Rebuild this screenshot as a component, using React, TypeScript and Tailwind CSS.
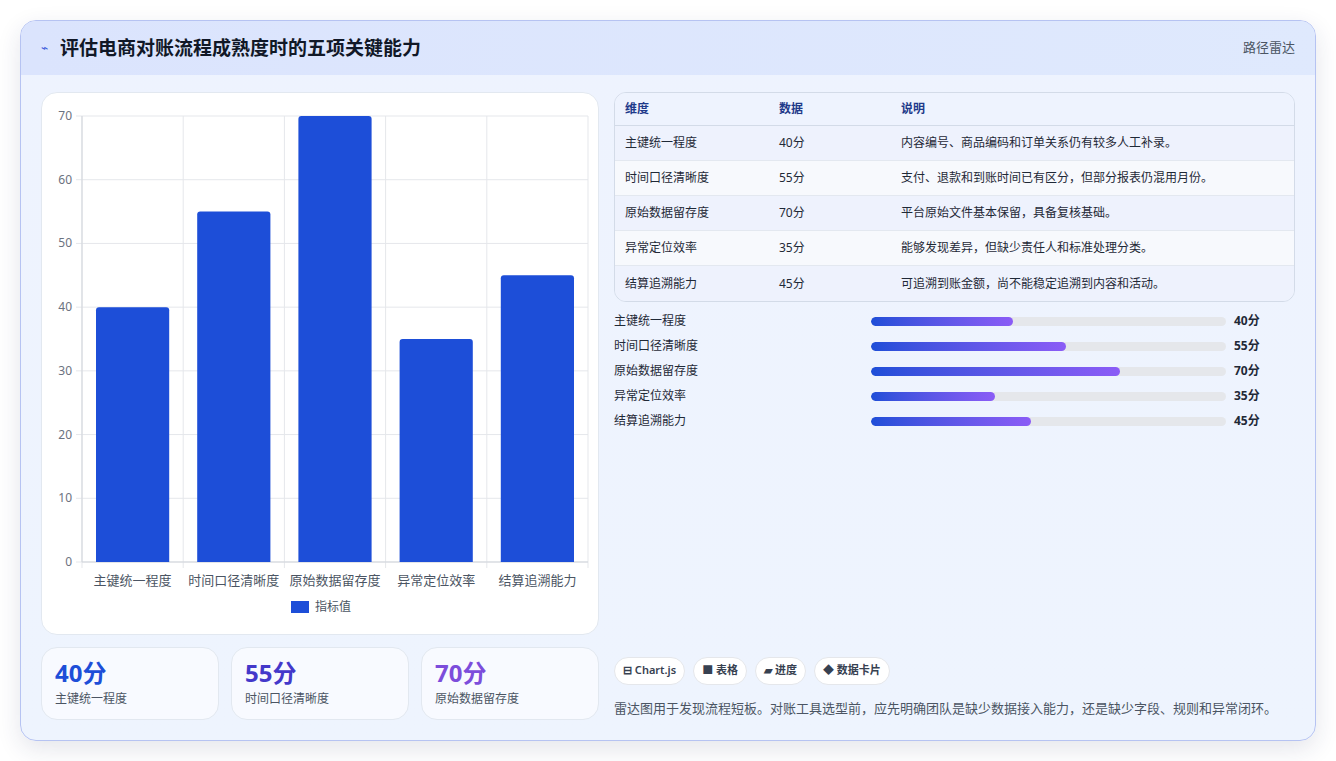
import React from "react";

const data = [
  { name: "主键统一程度", v: 40, d: "内容编号、商品编码和订单关系仍有较多人工补录。" },
  { name: "时间口径清晰度", v: 55, d: "支付、退款和到账时间已有区分，但部分报表仍混用月份。" },
  { name: "原始数据留存度", v: 70, d: "平台原始文件基本保留，具备复核基础。" },
  { name: "异常定位效率", v: 35, d: "能够发现差异，但缺少责任人和标准处理分类。" },
  { name: "结算追溯能力", v: 45, d: "可追溯到账金额，尚不能稳定追溯到内容和活动。" },
];

function Chart() {
  const x0 = 40, x1 = 546, y0 = 23, y1 = 469;
  const h = y1 - y0;
  const cw = (x1 - x0) / 5;
  return (
    <svg width="558" height="542" className="block">
      {[0, 10, 20, 30, 40, 50, 60, 70].map((t) => {
        const y = y1 - (t / 70) * h;
        return (
          <g key={t}>
            <line x1={x0 - 6} x2={x1} y1={y} y2={y} stroke="#e5e7eb" />
            <text x={x0 - 10} y={y + 4} textAnchor="end" fontSize="12" fill="#6b7280">{t}</text>
          </g>
        );
      })}
      {[0, 1, 2, 3, 4, 5].map((i) => (
        <line key={i} x1={x0 + i * cw} x2={x0 + i * cw} y1={y0} y2={y1 + 6} stroke="#e5e7eb" />
      ))}
      <line x1={x0} x2={x0} y1={y0} y2={y1} stroke="#d1d5db" />
      <line x1={x0} x2={x1} y1={y1} y2={y1} stroke="#d1d5db" />
      {data.map((d, i) => {
        const bh = (d.v / 70) * h;
        const bx = x0 + i * cw + 14;
        return (
          <g key={i}>
            <path d={`M${bx} ${y1} V${y1 - bh + 3} Q${bx} ${y1 - bh} ${bx + 3} ${y1 - bh} H${bx + cw - 31} Q${bx + cw - 28} ${y1 - bh} ${bx + cw - 28} ${y1 - bh + 3} V${y1} Z`} fill="#1d4ed8" />
            <text x={x0 + i * cw + cw / 2} y={y1 + 23} textAnchor="middle" fontSize="13" fill="#4b5563">{d.name}</text>
          </g>
        );
      })}
      <rect x={249} y={508} width={18} height={12} fill="#1d4ed8" />
      <text x={273} y={518} fontSize="12" fill="#4b5563">指标值</text>
    </svg>
  );
}

export default function App() {
  return (
    <div className="w-[1336px] h-[761px] bg-white p-5" style={{ fontFamily: '"Noto Sans", "Noto Sans CJK SC", sans-serif' }}>
      <div className="h-[721px] rounded-2xl border border-[#b6c3f2] bg-gradient-to-b from-[#eef3fe] to-[#eef4fe] overflow-hidden shadow-[0_8px_24px_rgba(30,40,90,0.12)] flex flex-col">
        <div className="h-[55px] flex items-center justify-between px-5 bg-gradient-to-r from-[#dbe4fd] to-[#dfe9fd]">
          <div className="flex items-center gap-3">
            <span className="text-[#3b5bdb] text-xs">⌁</span>
            <span className="text-[19px] font-bold text-[#111827]">评估电商对账流程成熟度时的五项关键能力</span>
          </div>
          <span className="text-[13px] text-[#4b5563]">路径雷达</span>
        </div>
        <div className="flex gap-[15px] px-5 pt-[17px] pb-5 flex-1">
          <div className="w-[558px] flex flex-col gap-3">
            <div className="h-[543px] bg-white rounded-2xl border border-[#e2e8f0]">
              <Chart />
            </div>
            <div className="flex gap-3">
              {[["40分", "主键统一程度", "#1d4ed8"], ["55分", "时间口径清晰度", "#4338ca"], ["70分", "原始数据留存度", "#7c4ddb"]].map(([v, l, c]) => (
                <div key={l} className="flex-1 h-[73px] rounded-2xl bg-[#f8faff] border border-[#e2e8f0] px-[13px] pt-[10px]">
                  <div className="text-[24px] font-bold leading-[30px]" style={{ color: c }}>{v}</div>
                  <div className="text-[12px] text-[#4b5563] mt-[2px]">{l}</div>
                </div>
              ))}
            </div>
          </div>
          <div className="flex-1 flex flex-col">
            <div className="rounded-xl border border-[#d3dbe8] overflow-hidden text-[12px] text-[#1f2937]">
              <div className="flex h-[33px] items-center bg-[#eef3fe] border-b border-[#d3dbe8] font-bold text-[#1e3a8a]">
                <div className="w-[164px] pl-[10px]">维度</div>
                <div className="w-[122px]">数据</div>
                <div>说明</div>
              </div>
              {data.map((d, i) => (
                <div key={i} className={`flex h-[35px] items-center ${i % 2 === 0 ? "bg-[#eef2fd]" : "bg-[#f7f9fd]"} ${i < 4 ? "border-b border-[#e3e8f0]" : ""}`}>
                  <div className="w-[164px] pl-[10px]">{d.name}</div>
                  <div className="w-[122px]">{d.v}分</div>
                  <div>{d.d}</div>
                </div>
              ))}
            </div>
            <div className="flex flex-col gap-[11px] mt-[12px]">
              {data.map((d, i) => (
                <div key={i} className="flex items-center h-[14px] text-[12px]">
                  <div className="w-[257px] text-[#1f2937]">{d.name}</div>
                  <div className="w-[355px] h-[9px] rounded-full bg-[#e5e7eb] overflow-hidden">
                    <div className="h-full rounded-full bg-gradient-to-r from-[#1d4ed8] to-[#8b5cf6]" style={{ width: `${d.v}%` }} />
                  </div>
                  <div className="ml-2 font-bold text-[#1f2937]">{d.v}分</div>
                </div>
              ))}
            </div>
            <div className="flex-1" />
            <div className="flex gap-2 mb-[14px]">
              {["⊟ Chart.js", "■ 表格", "▰ 进度", "◆ 数据卡片"].map((t) => (
                <span key={t} className="h-[28px] px-[8px] flex items-center rounded-full bg-white border border-[#e5e7eb] text-[11px] font-semibold text-[#374151]">{t}</span>
              ))}
            </div>
            <div className="text-[13px] text-[#4b5563] mb-[2px]">雷达图用于发现流程短板。对账工具选型前，应先明确团队是缺少数据接入能力，还是缺少字段、规则和异常闭环。</div>
          </div>
        </div>
      </div>
    </div>
  );
}
